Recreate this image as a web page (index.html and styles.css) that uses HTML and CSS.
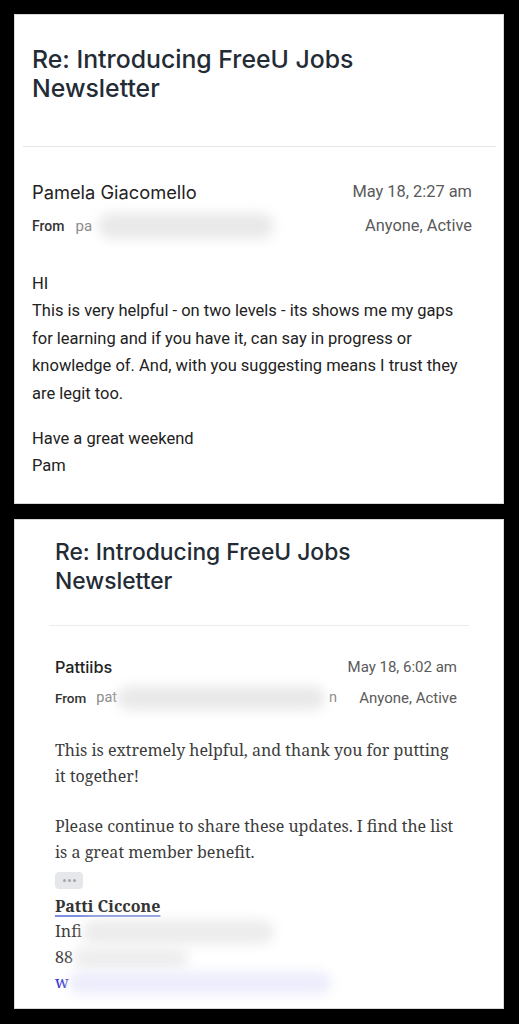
FILE: index.html
```html
<!DOCTYPE html>
<html lang="en">
<head>
<meta charset="utf-8">
<title>Re: Introducing FreeU Jobs Newsletter</title>
<link rel="stylesheet" href="styles.css">
</head>
<body>
  <article class="card card-a">
    <h1 class="title">Re: Introducing FreeU Jobs Newsletter</h1>
    <hr class="rule">
    <div class="meta">
      <div class="row">
        <span class="name">Pamela Giacomello</span>
        <span class="date">May 18, 2:27 am</span>
      </div>
      <div class="row row-from">
        <span class="from"><b>From</b><span class="addr">pa</span><span class="blur blur-a"></span></span>
        <span class="vis">Anyone, Active</span>
      </div>
    </div>
    <div class="body">
      <p>HI<br>This is very helpful - on two levels - its shows me my gaps for learning and if you have it, can say in progress or knowledge of. And, with you suggesting means I trust they are legit too.</p>
      <p>Have a great weekend<br>Pam</p>
    </div>
  </article>

  <article class="card card-b">
    <h1 class="title">Re: Introducing FreeU Jobs Newsletter</h1>
    <hr class="rule">
    <div class="meta">
      <div class="row">
        <span class="name">Pattiibs</span>
        <span class="date">May 18, 6:02 am</span>
      </div>
      <div class="row row-from">
        <span class="from"><b>From</b><span class="addr">pat</span><span class="blur blur-b"></span><span class="addr tail">n</span></span>
        <span class="vis">Anyone, Active</span>
      </div>
    </div>
    <div class="body serif">
      <p>This is extremely helpful, and thank you for putting it together!</p>
      <p>Please continue to share these updates. I find the list is a great member benefit.</p>
      <button class="more" type="button" aria-label="Show trimmed content"><span></span><span></span><span></span></button>
      <div class="sig">
        <a class="sig-name" href="#">Patti Ciccone</a>
        <div class="sig-line">Infi<span class="blur blur-c"></span></div>
        <div class="sig-line">88<span class="blur blur-d"></span></div>
        <div class="sig-line"><span class="link">w</span><span class="blur blur-e"></span></div>
      </div>
    </div>
  </article>
</body>
</html>
```

FILE: styles.css
```css
html, body {
  margin: 0;
  background: #000;
}

body {
  padding: 14px 15px 15px 14px;
  font-family: Roboto, "Noto Sans", "Liberation Sans", sans-serif;
}

.card {
  background: #fff;
  width: 490px;
  height: 490px;
  box-sizing: border-box;
  overflow: hidden;
  box-shadow: inset 0 0 0 1px #d8d8d8;
}

.card + .card {
  margin-top: 15px;
}

.card-a {
  padding: 30.6px 32px 0 18px;
}

.card-b {
  padding: 18.3px 47px 0 41px;
}

.title {
  margin: 0;
  font-family: Inter, Roboto, "Liberation Sans", sans-serif;
  font-weight: 500;
  color: #232b35;
  letter-spacing: 0;
}

.card-a .title {
  font-size: 24.8px;
  line-height: 29px;
  max-width: 380px;
}

.card-b .title {
  font-size: 22.8px;
  line-height: 29px;
  max-width: 340px;
}

.rule {
  border: 0;
  height: 1px;
  background: #e2e5e9;
}

.card-a .rule {
  margin: 43px -24px 0 -9px;
}

.card-b .rule {
  margin: 29.7px -12px 0 -6px;
  background: #ececec;
}

.card-a .meta {
  margin-top: 33px;
}

.card-b .meta {
  margin-top: 28.7px;
}

.row {
  display: flex;
  justify-content: space-between;
  align-items: center;
  height: 24px;
  line-height: 24px;
  white-space: nowrap;
}

.card-a .row-from {
  margin-top: 10px;
}

.card-b .row-from {
  margin-top: 7.7px;
}

.name {
  font-family: Inter, Roboto, "Liberation Sans", sans-serif;
  color: #222;
}

.card-a .name {
  font-size: 18.3px;
}

.card-b .name {
  font-size: 16.3px;
  font-weight: 500;
}

.date,
.vis {
  color: #5a5a5a;
  flex-shrink: 0;
}

.card-a .date,
.card-a .vis {
  font-size: 16.4px;
}

.card-b .date,
.card-b .vis {
  font-size: 15px;
}

.from {
  display: flex;
  align-items: center;
  color: #333;
  min-width: 0;
}

.from b {
  font-weight: 500;
  color: #333;
}

.card-a .from b {
  font-size: 14px;
}

.card-b .from b {
  font-size: 13.5px;
}

.addr {
  color: #8a8a8a;
}

.card-a .addr {
  font-size: 15px;
  margin-left: 11px;
}

.card-b .addr {
  font-size: 14.5px;
  margin-left: 10px;
}

.card-b .addr.tail {
  margin-left: 4px;
  margin-right: 6px;
}

.blur {
  display: inline-block;
  flex-shrink: 1;
  background: #e9e9e9;
  border-radius: 14px;
  filter: blur(6px);
}

.blur-a {
  width: 176px;
  height: 26px;
  margin-left: 6px;
}

.blur-b {
  width: 208px;
  height: 24px;
  margin-left: 0;
}

.body p {
  margin: 0;
}

.card-a .body {
  margin-top: 32px;
  font-size: 16.5px;
  line-height: 27.5px;
  color: #222;
}

.card-a .body p + p {
  margin-top: 17.5px;
}

.serif {
  font-family: "Noto Serif", "DejaVu Serif", "Liberation Serif", serif;
  color: #3c3c3c;
}

.card-b .body {
  margin-top: 26.6px;
  font-size: 16px;
  line-height: 26px;
}

.card-b .body p + p {
  margin-top: 24px;
}

.more {
  display: flex;
  align-items: center;
  justify-content: center;
  gap: 2px;
  width: 28px;
  height: 17px;
  margin-top: 7px;
  padding: 0;
  border: 0;
  border-radius: 4px;
  background: #e6e7ea;
}

.more span {
  width: 3px;
  height: 3px;
  border-radius: 50%;
  background: #a3a6ab;
}

.sig {
  margin-top: 4.8px;
  line-height: 25.5px;
}

.sig-name {
  display: inline-block;
  font-weight: 700;
  color: #333;
  text-decoration: underline;
  text-decoration-color: #7e8ee0;
  text-decoration-thickness: 2px;
  text-underline-offset: 3px;
}

.sig-line {
  display: flex;
  align-items: center;
}

.blur-c {
  width: 192px;
  height: 24px;
  background: #ececec;
}

.blur-d {
  width: 115px;
  height: 22px;
  background: #eeeeee;
}

.blur-e {
  width: 262px;
  height: 22px;
  background: #ececfc;
}

.link {
  color: #3f3fd8;
  font-weight: 500;
}
```
